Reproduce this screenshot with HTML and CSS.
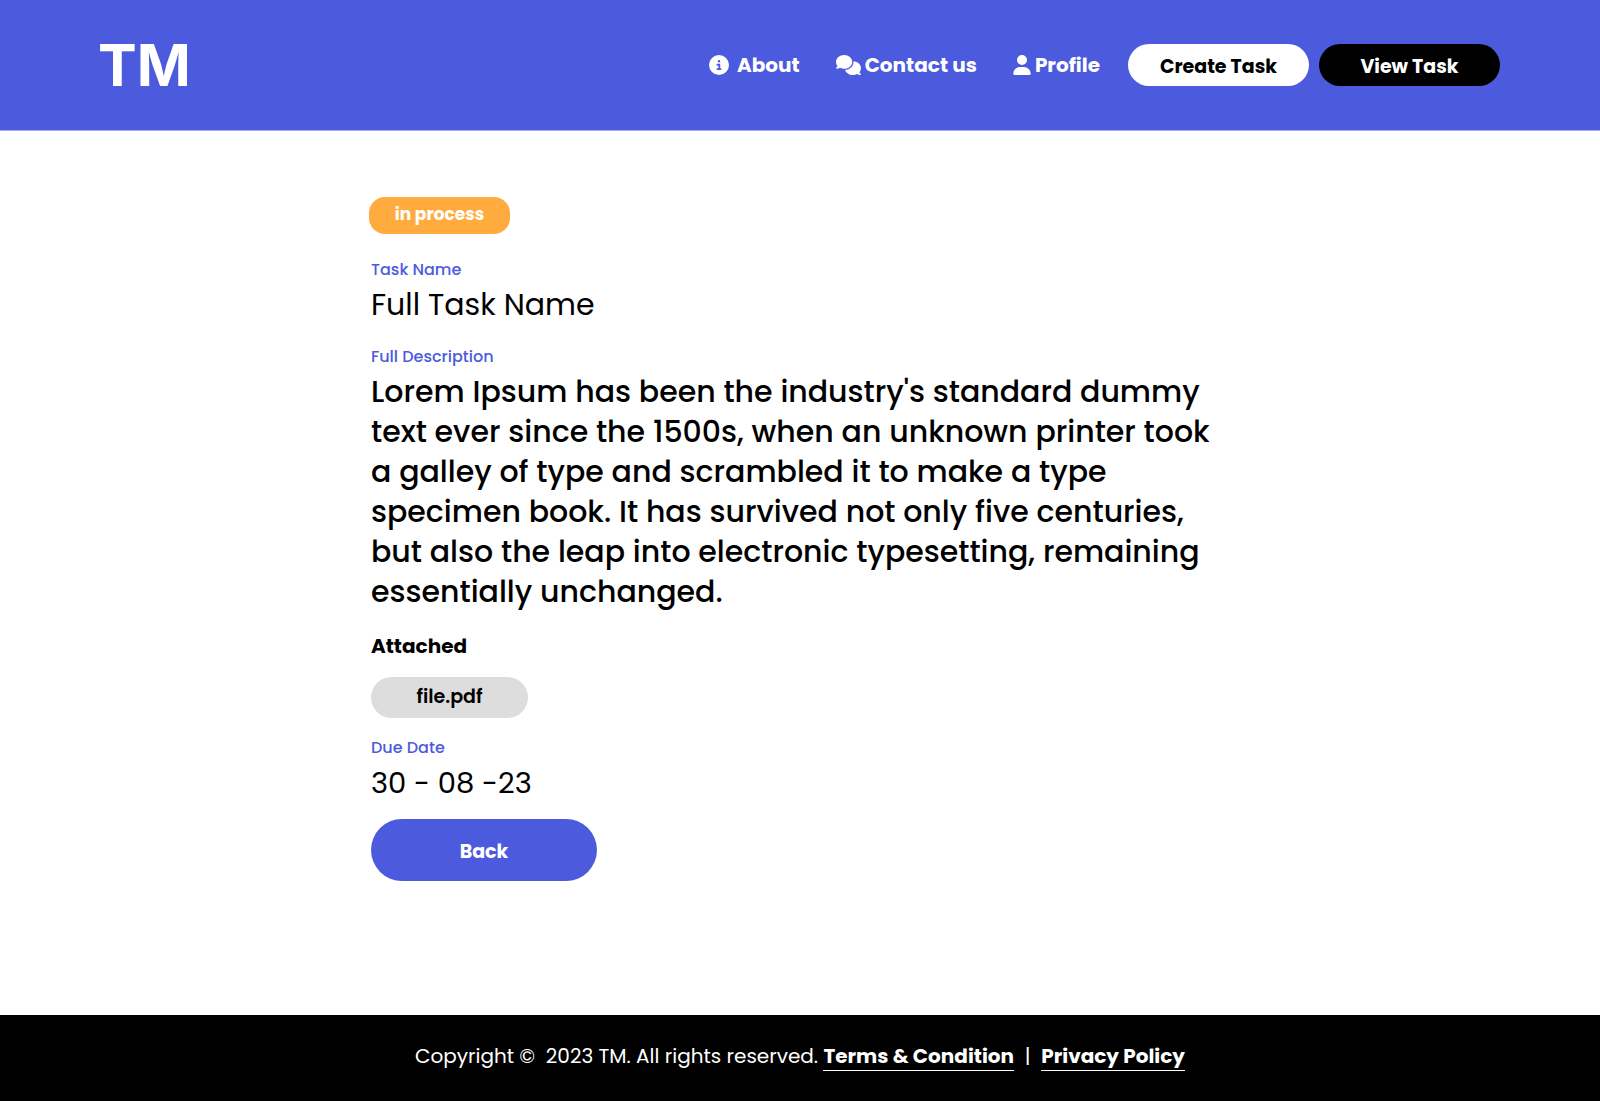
FILE: index.html
```html
<!DOCTYPE html>
<html lang="en">
<head>
<meta charset="utf-8">
<meta name="viewport" content="width=device-width, initial-scale=1">
<title>TM - Task</title>
<link rel="stylesheet" href="styles.css">
</head>
<body>
<header class="header">
  <a class="logo" href="#">TM</a>
  <div class="menu">
    <nav class="nav">
      <a class="nav-link about" href="#"><svg class="icon" width="20" height="20" viewBox="0 0 512 512" aria-hidden="true"><path d="M256 512A256 256 0 1 0 256 0a256 256 0 1 0 0 512zM216 336h24V272H216c-13.3 0-24-10.7-24-24s10.7-24 24-24h48c13.3 0 24 10.7 24 24v88h8c13.3 0 24 10.7 24 24s-10.7 24-24 24H216c-13.3 0-24-10.7-24-24s10.7-24 24-24zm40-208a32 32 0 1 1 0 64 32 32 0 1 1 0-64z"/></svg>About</a>
      <a class="nav-link" href="#"><svg class="icon" width="25" height="20" viewBox="0 0 640 512" aria-hidden="true"><path d="M208 352c114.900 0 208-78.800 208-176S322.900 0 208 0S0 78.800 0 176c0 38.600 14.700 74.300 39.600 103.400c-3.500 9.400-8.700 17.700-14.200 24.700c-4.800 6.200-9.700 11-13.300 14.300c-1.800 1.600-3.300 2.900-4.300 3.700c-.5 .4-.9 .7-1.100 .8l-.2 .2C1 327.200-1.400 334.400 .8 340.900S9.100 352 16 352c21.800 0 43.800-5.600 62.100-12.500c9.200-3.500 17.800-7.400 25.200-11.400C134.100 343.300 169.800 352 208 352zM448 176c0 112.300-99.100 196.900-216.500 207C255.800 457.400 336.400 512 432 512c38.200 0 73.900-8.700 104.700-23.900c7.500 4 16 7.900 25.200 11.400c18.300 6.900 40.300 12.500 62.100 12.500c6.900 0 13.100-4.500 15.200-11.100c2.100-6.600-.2-13.800-5.800-17.900l-.2-.2c-.2-.2-.6-.4-1.100-.8c-1-.8-2.500-2-4.300-3.700c-3.600-3.300-8.500-8.100-13.300-14.300c-5.500-7-10.700-15.400-14.200-24.700c24.900-29 39.600-64.700 39.600-103.400c0-92.800-84.900-168.900-192.600-175.500c.4 5.100 .6 10.300 .6 15.500z"/></svg>Contact us</a>
      <a class="nav-link" href="#"><svg class="icon" width="18" height="20" viewBox="0 0 448 512" aria-hidden="true"><path d="M224 256A128 128 0 1 0 224 0a128 128 0 1 0 0 256zm-45.700 48C79.800 304 0 383.800 0 482.300C0 498.700 13.300 512 29.700 512H418.300c16.400 0 29.700-13.300 29.700-29.700C448 383.800 368.200 304 269.700 304H178.300z"/></svg>Profile</a>
    </nav>
    <div class="actions">
      <button class="pill pill-light" type="button">Create Task</button>
      <button class="pill pill-dark" type="button">View Task</button>
    </div>
  </div>
</header>

<main class="task">
  <span class="status">in process</span>
  <dl class="fields">
    <dt class="label">Task Name</dt>
    <dd class="value">Full Task Name</dd>
    <dt class="label">Full Description</dt>
    <dd class="value description">Lorem Ipsum has been the industry's standard dummy<br>text ever since the 1500s, when an unknown printer took<br>a galley of type and scrambled it to make a type<br>specimen book. It has survived not only five centuries,<br>but also the leap into electronic typesetting, remaining<br>essentially unchanged.</dd>
    <dt class="attached">Attached</dt>
    <dd class="file-row"><a class="file" href="#">file.pdf</a></dd>
    <dt class="label">Due Date</dt>
    <dd class="value date">30 - 08 -23</dd>
  </dl>
  <button class="back" type="button">Back</button>
</main>

<footer class="footer">
  <p class="legal">Copyright ©&nbsp; 2023 TM. All rights reserved. <a class="legal-link" href="#">Terms &amp; Condition</a>&nbsp; |&nbsp; <a class="legal-link" href="#">Privacy Policy</a></p>
</footer>
</body>
</html>
```
FILE: styles.css
```css
* {
  box-sizing: border-box;
}

body {
  margin: 0;
  min-height: 100vh;
  display: flex;
  flex-direction: column;
  background: #fff;
  color: #000;
  font-family: Poppins, Inter, sans-serif;
}

a {
  color: inherit;
  text-decoration: none;
}

button {
  border: 0;
  font-family: inherit;
  cursor: pointer;
}

.header {
  display: flex;
  align-items: center;
  justify-content: space-between;
  min-height: 131px;
  padding: 0 100px 0 98px;
  background: #4c5bdd;
  border-bottom: 1px solid #a5adee;
  color: #fff;
}

.logo {
  font-family: Inter, sans-serif;
  font-size: 58px;
  font-weight: 700;
  line-height: 72px;
}

.menu {
  display: flex;
  align-items: center;
  gap: 28px;
}

.nav {
  display: flex;
  align-items: center;
  gap: 36px;
}

.nav-link {
  display: flex;
  align-items: center;
  gap: 4px;
  font-size: 20px;
  font-weight: 700;
  line-height: 30px;
}

.about {
  gap: 8px;
}

.icon {
  fill: currentColor;
}

.actions {
  display: flex;
  gap: 10px;
}

.pill {
  width: 181px;
  height: 42px;
  padding: 2px 0 0;
  border-radius: 21px;
  font-size: 19px;
  font-weight: 700;
}

.pill-light {
  background: #fff;
  color: #000;
}

.pill-dark {
  background: #000;
  color: #fff;
}

.task {
  flex: 1;
  width: 100%;
  max-width: 862px;
  margin: 0 auto;
  padding: 66px 0 132px;
}

.status {
  display: block;
  width: 141px;
  padding-bottom: 2px;
  border-radius: 16px;
  background: #ffab3e;
  color: #fff;
  font-size: 17px;
  font-weight: 700;
  line-height: 35px;
  text-align: center;
}

.fields {
  margin: 24px 0 16px 2px;
}

.label {
  color: #4c5bdd;
  font-size: 16px;
  font-weight: 500;
  line-height: 24px;
}

.value {
  margin: 3px 0 20px;
  font-size: 30px;
  line-height: 40px;
}

.description {
  font-weight: 500;
}

.attached {
  font-size: 20px;
  font-weight: 700;
  line-height: 28px;
}

.file-row {
  margin: 17px 0 18px;
}

.file {
  display: block;
  width: 157px;
  padding-bottom: 2px;
  border-radius: 21px;
  background: #ddd;
  font-size: 19px;
  font-weight: 600;
  line-height: 39px;
  text-align: center;
}

.date {
  margin-bottom: 0;
  font-size: 29px;
}

.back {
  width: 226px;
  height: 62px;
  margin-left: 2px;
  padding: 2px 0 0;
  border-radius: 31px;
  background: #4c5bdd;
  color: #fff;
  font-size: 19px;
  font-weight: 700;
}

.footer {
  padding: 26px 24px 30px;
  background: #000;
  color: #fff;
  text-align: center;
}

.legal {
  margin: 0;
  font-size: 20px;
  line-height: 30px;
}

.legal-link {
  border-bottom: 1px solid #fff;
  font-weight: 700;
}
```
